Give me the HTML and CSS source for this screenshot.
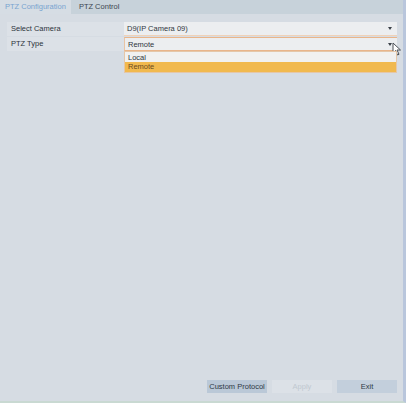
FILE: index.html
```html
<!DOCTYPE html>
<html lang="en">
<head>
  <meta charset="UTF-8" />
  <title>PTZ</title>
  <link rel="stylesheet" href="styles.css">
</head>
<body>
  <div class="window">
    <div class="tabs">
      <div class="tab active">PTZ Configuration</div>
      <div class="tab">PTZ Control</div>
    </div>

    <div class="content">
      <div class="form">
        <div class="row">
          <div class="label">Select Camera</div>
          <div class="select">
            <span>D9(IP Camera 09)</span>
            <span class="arrow"></span>
          </div>
        </div>
        <div class="row">
          <div class="label">PTZ Type</div>
          <div class="select open">
            <span>Remote</span>
            <span class="arrow"></span>
            <svg class="cursor" width="10" height="14" viewBox="0 0 10 14">
              <path d="M1 1 L1 11 L3.5 8.5 L5.5 13 L7 12.3 L5 8 L8.5 8 Z" fill="#ffffff" stroke="#4a4f55" stroke-width="1"/>
            </svg>
            <div class="dropdown">
              <div class="option">Local</div>
              <div class="option selected">Remote</div>
            </div>
          </div>
        </div>
      </div>

      <div class="buttons">
        <button class="btn custom">Custom Protocol</button>
        <button class="btn" disabled>Apply</button>
        <button class="btn">Exit</button>
      </div>
    </div>
  </div>
</body>
</html>
```

FILE: styles.css
```css
html, body {
  margin: 0;
  padding: 0;
}

body {
  font-family: "Liberation Sans", Arial, sans-serif;
  font-size: 7.5px;
  color: #2e3640;
  background-color: #d6dce3;
}

.window {
  width: 406px;
  height: 403px;
  display: flex;
  flex-direction: column;
  box-sizing: border-box;
  border-right: 3px solid #b9c6dc;
  border-bottom: 2px solid #c9d9d2;
}

.tabs {
  display: flex;
  height: 14px;
  background-color: #c7d2da;
}

.tab {
  padding: 0 9px 0 8px;
  line-height: 14px;
  color: #3b4550;
}

.tab.active {
  background-color: #d6dde4;
  color: #78a4d0;
  padding: 0 5px 0 5px;
}

.content {
  flex: 1;
  display: flex;
  flex-direction: column;
  justify-content: space-between;
  padding: 8px 6px 8px 7px;
}

.form {
  display: flex;
  flex-direction: column;
}

.row {
  display: flex;
  height: 14px;
  margin-bottom: 1px;
}

.label {
  width: 113px;
  padding-left: 4px;
  line-height: 14px;
  background-color: #dce1e7;
  color: #2c333b;
}

.select {
  position: relative;
  flex: 1;
  display: flex;
  align-items: center;
  justify-content: space-between;
  padding: 0 4px 0 3px;
  background-color: #eceef0;
  border-bottom: 1px solid #f0d2b8;
  box-sizing: border-box;
}

.select.open {
  border-top: 1px solid #e9b58a;
  border-bottom: 1px solid #e9b58a;
  border-left: 1px solid #e9c4a4;
}

.arrow {
  width: 0;
  height: 0;
  border-left: 2px solid transparent;
  border-right: 2px solid transparent;
  border-top: 3px solid #3b4148;
  margin-right: 1px;
}

.cursor {
  position: absolute;
  right: -5px;
  top: 4px;
}

.dropdown {
  position: absolute;
  left: -1px;
  right: 0;
  top: 13px;
  background-color: #f1f1f0;
  border: 1px solid #e5c7a8;
  padding-top: 1px;
}

.option {
  height: 9px;
  line-height: 9px;
  padding-left: 3px;
}

.option.selected {
  background-color: #f1b94e;
  color: #6a4a20;
  height: 10px;
  line-height: 10px;
}

.buttons {
  display: flex;
  justify-content: flex-end;
  gap: 5px;
}

.btn {
  width: 60px;
  height: 13px;
  padding: 0;
  font-family: "Liberation Sans", Arial, sans-serif;
  font-size: 7.5px;
  color: #2f3944;
  background-color: #c3cfdc;
  border: none;
}

.btn.custom {
  background-color: #bac8d7;
}

.btn:disabled {
  background-color: #dce1e7;
  color: #c0c8d0;
}
```
